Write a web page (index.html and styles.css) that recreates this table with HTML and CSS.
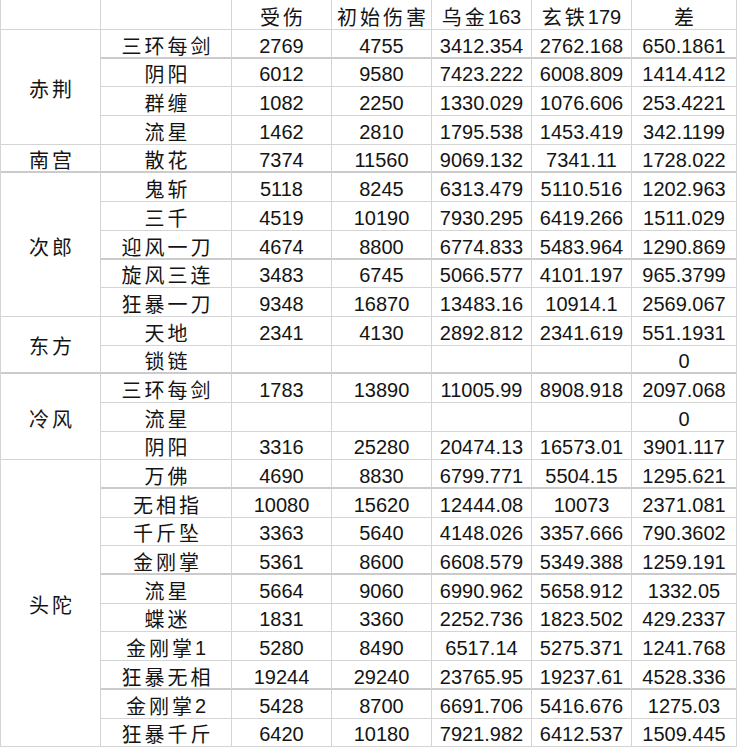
FILE: index.html
```html
<!DOCTYPE html>
<html lang="zh">
<head>
<meta charset="utf-8">
<title>伤害表</title>
<link rel="stylesheet" href="styles.css">
</head>
<body>
<div class="sheet">
  <div class="cell"></div><div class="cell"></div>
  <div class="cell"><span class="c">受伤</span></div>
  <div class="cell"><span class="c">初始伤害</span></div>
  <div class="cell"><span class="c n">乌金</span>163</div>
  <div class="cell"><span class="c n">玄铁</span>179</div>
  <div class="cell"><span class="c">差</span></div>

  <div class="cell grp span4"><span class="c">赤荆</span></div>
  <div class="cell tb"><span class="c">三环每剑</span></div><div class="cell tb">2769</div><div class="cell tb">4755</div><div class="cell tb">3412.354</div><div class="cell tb">2762.168</div><div class="cell tb">650.1861</div>
  <div class="cell"><span class="c">阴阳</span></div><div class="cell">6012</div><div class="cell">9580</div><div class="cell">7423.222</div><div class="cell">6008.809</div><div class="cell">1414.412</div>
  <div class="cell"><span class="c">群缠</span></div><div class="cell">1082</div><div class="cell">2250</div><div class="cell">1330.029</div><div class="cell">1076.606</div><div class="cell">253.4221</div>
  <div class="cell"><span class="c">流星</span></div><div class="cell">1462</div><div class="cell">2810</div><div class="cell">1795.538</div><div class="cell">1453.419</div><div class="cell">342.1199</div>

  <div class="cell grp tb"><span class="c">南宫</span></div>
  <div class="cell tb"><span class="c">散花</span></div><div class="cell tb">7374</div><div class="cell tb">11560</div><div class="cell tb">9069.132</div><div class="cell tb">7341.11</div><div class="cell tb">1728.022</div>

  <div class="cell grp span5"><span class="c">次郎</span></div>
  <div class="cell"><span class="c">鬼斩</span></div><div class="cell">5118</div><div class="cell">8245</div><div class="cell">6313.479</div><div class="cell">5110.516</div><div class="cell">1202.963</div>
  <div class="cell"><span class="c">三千</span></div><div class="cell">4519</div><div class="cell">10190</div><div class="cell">7930.295</div><div class="cell">6419.266</div><div class="cell">1511.029</div>
  <div class="cell tb"><span class="c">迎风一刀</span></div><div class="cell tb">4674</div><div class="cell tb">8800</div><div class="cell tb">6774.833</div><div class="cell tb">5483.964</div><div class="cell tb">1290.869</div>
  <div class="cell"><span class="c">旋风三连</span></div><div class="cell">3483</div><div class="cell">6745</div><div class="cell">5066.577</div><div class="cell">4101.197</div><div class="cell">965.3799</div>
  <div class="cell"><span class="c">狂暴一刀</span></div><div class="cell">9348</div><div class="cell">16870</div><div class="cell">13483.16</div><div class="cell">10914.1</div><div class="cell">2569.067</div>

  <div class="cell grp span2 tb"><span class="c">东方</span></div>
  <div class="cell"><span class="c">天地</span></div><div class="cell">2341</div><div class="cell">4130</div><div class="cell">2892.812</div><div class="cell">2341.619</div><div class="cell">551.1931</div>
  <div class="cell tb"><span class="c">锁链</span></div><div class="cell tb"></div><div class="cell tb"></div><div class="cell tb"></div><div class="cell tb"></div><div class="cell tb">0</div>

  <div class="cell grp span3"><span class="c">冷风</span></div>
  <div class="cell"><span class="c">三环每剑</span></div><div class="cell">1783</div><div class="cell">13890</div><div class="cell">11005.99</div><div class="cell">8908.918</div><div class="cell">2097.068</div>
  <div class="cell"><span class="c">流星</span></div><div class="cell"></div><div class="cell"></div><div class="cell"></div><div class="cell"></div><div class="cell">0</div>
  <div class="cell"><span class="c">阴阳</span></div><div class="cell">3316</div><div class="cell">25280</div><div class="cell">20474.13</div><div class="cell">16573.01</div><div class="cell">3901.117</div>

  <div class="cell grp span10"><span class="c">头陀</span></div>
  <div class="cell tb"><span class="c">万佛</span></div><div class="cell tb">4690</div><div class="cell tb">8830</div><div class="cell tb">6799.771</div><div class="cell tb">5504.15</div><div class="cell tb">1295.621</div>
  <div class="cell"><span class="c">无相指</span></div><div class="cell">10080</div><div class="cell">15620</div><div class="cell">12444.08</div><div class="cell">10073</div><div class="cell">2371.081</div>
  <div class="cell"><span class="c">千斤坠</span></div><div class="cell">3363</div><div class="cell">5640</div><div class="cell">4148.026</div><div class="cell">3357.666</div><div class="cell">790.3602</div>
  <div class="cell tb"><span class="c">金刚掌</span></div><div class="cell tb">5361</div><div class="cell tb">8600</div><div class="cell tb">6608.579</div><div class="cell tb">5349.388</div><div class="cell tb">1259.191</div>
  <div class="cell"><span class="c">流星</span></div><div class="cell">5664</div><div class="cell">9060</div><div class="cell">6990.962</div><div class="cell">5658.912</div><div class="cell">1332.05</div>
  <div class="cell"><span class="c">蝶迷</span></div><div class="cell">1831</div><div class="cell">3360</div><div class="cell">2252.736</div><div class="cell">1823.502</div><div class="cell">429.2337</div>
  <div class="cell"><span class="c n">金刚掌</span>1</div><div class="cell">5280</div><div class="cell">8490</div><div class="cell">6517.14</div><div class="cell">5275.371</div><div class="cell">1241.768</div>
  <div class="cell tb"><span class="c">狂暴无相</span></div><div class="cell tb">19244</div><div class="cell tb">29240</div><div class="cell tb">23765.95</div><div class="cell tb">19237.61</div><div class="cell tb">4528.336</div>
  <div class="cell"><span class="c n">金刚掌</span>2</div><div class="cell">5428</div><div class="cell">8700</div><div class="cell">6691.706</div><div class="cell">5416.676</div><div class="cell">1275.03</div>
  <div class="cell"><span class="c">狂暴千斤</span></div><div class="cell">6420</div><div class="cell">10180</div><div class="cell">7921.982</div><div class="cell">6412.537</div><div class="cell">1509.445</div>
</div>
</body>
</html>
```
FILE: styles.css
```css
html, body {
  margin: 0;
  padding: 0;
  background: #ffffff;
}

.sheet {
  display: grid;
  grid-template-columns: 100px 131px 100px 100px 100px 100px 105px;
  grid-template-rows: 30px repeat(25, 28.7px);
  border-left: 1px solid #d4d4d4;
  width: max-content;
  font-family: "Liberation Sans", "Noto Sans CJK SC", sans-serif;
  font-size: 20px;
  color: #141414;
}

.cell {
  box-sizing: border-box;
  border-right: 1px solid #d4d4d4;
  border-bottom: 1px solid #d4d4d4;
  display: flex;
  align-items: flex-end;
  justify-content: center;
  line-height: 20px;
  padding-bottom: 2px;
  white-space: nowrap;
  overflow: hidden;
}

.cell.tb {
  border-bottom: 2px solid #cbcbcb;
  padding-bottom: 1px;
}

.grp {
  align-items: center;
  padding-bottom: 0;
  padding-top: 4px;
}

.span2 { grid-row: span 2; }
.span3 { grid-row: span 3; }
.span4 { grid-row: span 4; }
.span5 { grid-row: span 5; }
.span10 { grid-row: span 10; }

.c {
  font-family: "Noto Sans CJK SC", sans-serif;
  letter-spacing: 3px;
  vertical-align: 2px;
  margin-right: -3px;
}

.c.n {
  margin-right: 0;
}
```
